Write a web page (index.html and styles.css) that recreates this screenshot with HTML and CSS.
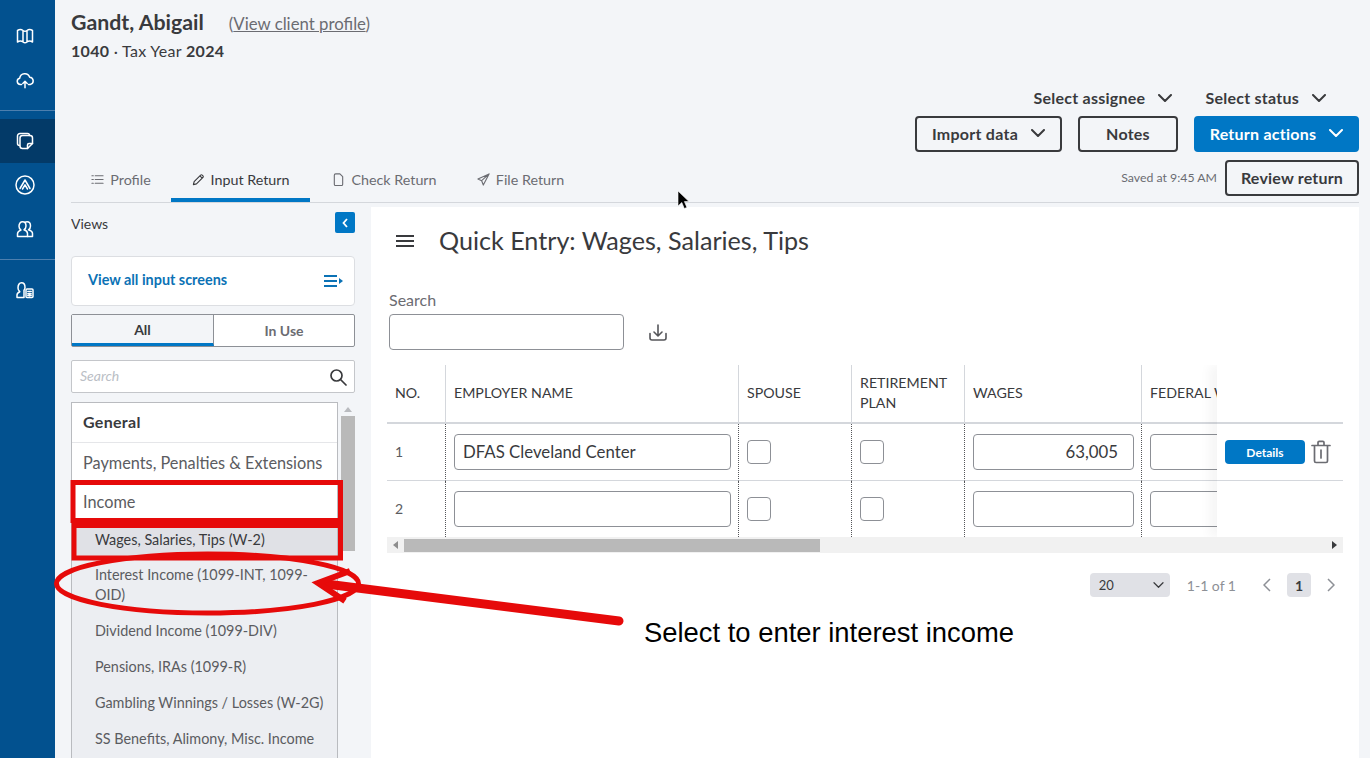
FILE: index.html
```html
<!DOCTYPE html>
<html lang="en">
<head>
<meta charset="utf-8">
<title>Quick Entry: Wages, Salaries, Tips</title>
<link rel="stylesheet" href="styles.css">
</head>
<body>
<div class="app">
  <nav class="rail">
    <div class="rail-group">
      <a class="rail-item"><svg class="ri" viewBox="0 0 18 18"><path d="M1.500 3.500c2-1.200 3.800-1.200 5.500 0v11.500c-1.700-1.200-3.500-1.200-5.500 0zM7 3.500c1.300 1 2.700 1 4 0V15c-1.300 1-2.700 1-4 0zM11 3.500c1.700-1.200 3.500-1.200 5.500 0V15c-2-1.200-3.800-1.200-5.500 0z"/></svg></a>
      <a class="rail-item"><svg class="ri" viewBox="0 0 18 18"><path d="M5.500 13.500H4.300a3.200 3.200 0 0 1-.6-6.300 5.200 5.200 0 0 1 10-1 3.700 3.700 0 0 1 .6 7.300h-1.800"/><path d="M9 16.800v-6.300M6.800 12.500 9 10.300l2.200 2.200"/></svg></a>
    </div>
    <div class="rail-group">
      <a class="rail-item active"><svg class="ri" viewBox="0 0 18 18"><path d="M3.500 13.500A2 2 0 0 1 1.500 11.500V4A2.500 2.500 0 0 1 4 1.500h7.500a2 2 0 0 1 2 2"/><path d="M4 6A2.500 2.500 0 0 1 6.500 3.500H14A2.500 2.500 0 0 1 16.500 6v5.500l-5 5H6.500A2.500 2.500 0 0 1 4 14z"/><path d="M11.500 16.500v-3.500a1.500 1.500 0 0 1 1.500-1.500h3.500"/></svg></a>
      <a class="rail-item"><svg class="ri ri-lg" viewBox="0 0 20 20"><circle cx="10" cy="10" r="9"/><path d="M5 13.500 10 5l5 8.500M7.500 14 10 9.800l2.500 4.200"/></svg></a>
      <a class="rail-item"><svg class="ri" viewBox="0 0 18 18"><path d="M1.500 16.500v-2.700c0-2 1.500-3 3.500-3.700-1.500-1-2-2.300-2-3.800C3 3.500 4.500 1.800 6.500 1.800S10 3.500 10 6c0 1.500-.5 2.800-2 3.800 2 .7 3.500 1.700 3.500 3.700v3z"/><path d="M9 2.300c.7-.3 1.400-.5 2-.5 2 0 3.500 1.700 3.500 4.200 0 1.500-.5 2.800-2 3.800 2 .7 4 1.700 4 3.700v3h-5"/></svg></a>
    </div>
    <div class="rail-group">
      <a class="rail-item"><svg class="ri" viewBox="0 0 18 18"><path d="M1 16.500v-2.500c0-1.800 1.200-2.600 2.800-3.300-1.200-.9-1.800-2.200-1.800-3.700C2 4 3.200 1.800 5.500 1.800S9 4 9 6.500c0 1-.3 2-1 2.800v7.200z"/><rect x="10" y="8" width="7" height="8.500" rx="1"/><path d="M11.800 10.500h3.400M11.800 12.800h3.400M11.800 14.500h3.400M13.500 12.500V15"/></svg></a>
    </div>
  </nav>

  <main class="main">
    <header class="head">
      <div class="client">
        <div class="client-row"><h1 class="client-name">Gandt, Abigail</h1><a class="client-link">(<u>View client profile</u>)</a></div>
        <div class="client-sub"><b>1040</b> · Tax Year <b>2024</b></div>
      </div>
      <div class="selects">
        <span class="sel">Select assignee <svg class="chev" viewBox="0 0 14 8"><path d="M1 1l6 6 6-6"/></svg></span>
        <span class="sel">Select status <svg class="chev" viewBox="0 0 14 8"><path d="M1 1l6 6 6-6"/></svg></span>
      </div>
      <div class="actions">
        <button class="btn btn-import">Import data <svg class="chev" viewBox="0 0 14 8"><path d="M1 1l6 6 6-6"/></svg></button>
        <button class="btn btn-notes">Notes</button>
        <button class="btn btn-primary">Return actions <svg class="chev" viewBox="0 0 14 8"><path d="M1 1l6 6 6-6"/></svg></button>
      </div>
    </header>

    <div class="tabbar">
      <div class="tabs">
        <a class="tab tab-profile"><svg class="tab-ico" viewBox="0 0 14 14"><path d="M4.500 3H13M4.500 7H13M4.500 11H13M1 3h1.500M1 7h1.500M1 11h1.500"/></svg>Profile</a>
        <a class="tab tab-input is-active"><svg class="tab-ico" viewBox="0 0 14 14"><path d="M1.500 12.500l.8-3.300 7-7a1.200 1.200 0 0 1 1.700 0l.8.800a1.200 1.200 0 0 1 0 1.700l-7 7zM8.500 3l2.500 2.500"/></svg>Input Return</a>
        <a class="tab tab-check"><svg class="tab-ico" viewBox="0 0 14 14"><path d="M2.500 2.500a1.500 1.500 0 0 1 1.500-1.500h4.500l3 3v8a1.500 1.500 0 0 1-1.500 1.500H4a1.500 1.500 0 0 1-1.500-1.500z"/></svg>Check Return</a>
        <a class="tab tab-file"><svg class="tab-ico" viewBox="0 0 14 14"><path d="M13 1 1 6.500l4 1.800L6.800 13zM13 1 5 8.300"/></svg>File Return</a>
      </div>
      <div class="review">
        <span class="saved">Saved at 9:45 AM</span>
        <button class="btn btn-review">Review return</button>
      </div>
    </div>

    <div class="work">
      <aside class="views">
        <div class="views-head"><span>Views</span><button class="collapse"><svg viewBox="0 0 6 10"><path d="M5 1 1.500 5 5 9"/></svg></button></div>
        <a class="all-screens"><span>View all input screens</span><svg class="list-ico" viewBox="0 0 19 14"><path class="ls" d="M0 2h13M0 7h13M0 12h13"/><path class="lf" d="M15 4l4 3-4 3z"/></svg></a>
        <div class="seg"><span class="seg-a">All</span><span class="seg-b">In Use</span></div>
        <div class="side-search"><span>Search</span><svg viewBox="0 0 18 18"><circle cx="7.500" cy="7.500" r="5.500"/><path d="M11.500 11.500 17 17"/></svg></div>
        <div class="list-wrap">
          <ul class="list">
            <li class="li-head">General</li>
            <li class="li-top">Payments, Penalties &amp; Extensions</li>
            <li class="li-top li-income">Income</li>
            <li class="li-sub li-current">Wages, Salaries, Tips (W-2)</li>
            <li class="li-sub li-two">Interest Income (1099-INT, 1099-OID)</li>
            <li class="li-sub">Dividend Income (1099-DIV)</li>
            <li class="li-sub">Pensions, IRAs (1099-R)</li>
            <li class="li-sub">Gambling Winnings / Losses (W-2G)</li>
            <li class="li-sub">SS Benefits, Alimony, Misc. Income</li>
          </ul>
          <div class="vbar"><i class="vup"></i><i class="vthumb"></i></div>
        </div>
      </aside>

      <section class="card">
        <div class="card-title"><svg class="burger" viewBox="0 0 18 12"><path d="M0 1h18M0 6h18M0 11h18"/></svg><h2>Quick Entry: Wages, Salaries, Tips</h2></div>
        <label class="search-label">Search</label>
        <div class="search-row">
          <div class="search-input"></div>
          <svg class="dl" viewBox="0 0 18 18"><path d="M1 9.500V14a2 2 0 0 0 2 2h12a2 2 0 0 0 2-2V9.500M9 1v10.500M5 8l4 4 4-4"/></svg>
        </div>
        <div class="table-wrap">
          <div class="grid">
            <div class="th">NO.</div><div class="th sep">EMPLOYER NAME</div><div class="th sep">SPOUSE</div><div class="th sep">RETIREMENT<br>PLAN</div><div class="th sep">WAGES</div><div class="th sep">FEDERAL WITHHELD</div>

            <div class="td td-r1">1</div>
            <div class="td td-r1 dot"><div class="inp">DFAS Cleveland Center</div></div>
            <div class="td td-r1 dot"><div class="chk"></div></div>
            <div class="td td-r1 dot"><div class="chk"></div></div>
            <div class="td td-r1 dot"><div class="inp inp-num">63,005</div></div>
            <div class="td td-r1 dot"><div class="inp inp-fed"></div></div>

            <div class="td">2</div>
            <div class="td dot"><div class="inp"></div></div>
            <div class="td dot"><div class="chk"></div></div>
            <div class="td dot"><div class="chk"></div></div>
            <div class="td dot"><div class="inp"></div></div>
            <div class="td dot"><div class="inp inp-fed"></div></div>
          </div>
          <div class="sticky">
            <div class="sticky-row">
              <button class="details">Details</button>
              <svg class="trash" viewBox="0 0 20 24"><path d="M1 5.500h18M3.500 5.500V21a1.500 1.500 0 0 0 1.500 1.500h10a1.500 1.500 0 0 0 1.500-1.500V5.500M7 5.500V2.500A1.200 1.200 0 0 1 8.200 1.300h3.600A1.200 1.200 0 0 1 13 2.500v3M10 10v8"/></svg>
            </div>
          </div>
          <div class="hbar"><i class="hl"></i><i class="hthumb"></i><i class="hr"></i></div>
        </div>
        <div class="pager">
          <div class="page-size"><span>20</span><svg class="chev chev-sm" viewBox="0 0 14 8"><path d="M1 1l6 6 6-6"/></svg></div>
          <span class="page-info">1-1 of 1</span>
          <svg class="pg-arrow" viewBox="0 0 8 14"><path d="M7 1 1 7l6 6"/></svg>
          <span class="page-num">1</span>
          <svg class="pg-arrow" viewBox="0 0 8 14"><path d="M1 1l6 6-6 6"/></svg>
        </div>
      </section>
    </div>
  </main>
</div>

<svg class="annot" viewBox="0 0 1370 758">
  <rect class="an-s" x="73" y="482.500" width="267.500" height="38"/>
  <rect class="an-s" x="74" y="525.500" width="266.500" height="32.500"/>
  <ellipse class="an-e" cx="207.500" cy="583.500" rx="151" ry="29.500"/>
  <path class="an-l" d="M619 621 326 584"/>
  <path class="an-h" d="M350 571 318 583 345 601"/>
</svg>
<p class="callout">Select to enter interest income</p>
<svg class="cursor" viewBox="0 0 14 20"><path d="M1 1v15l3.800-3.500 2.500 6 2.600-1.100-2.500-5.800H12z"/></svg>
</body>
</html>
```
FILE: styles.css
```css
* , *::before, *::after { box-sizing: border-box; }
html, body { margin: 0; height: 100%; overflow: hidden; }
body { font-family: "Lato", "Liberation Sans", sans-serif; color: #393a3d; background: #f3f5f8; position: relative; }
button { font-family: inherit; cursor: pointer; }
h1, h2, ul, p { margin: 0; padding: 0; }

.app { display: flex; height: 758px; }

.rail { width: 55px; flex: none; background: #02518f; display: flex; flex-direction: column; padding-top: 14px; }
.rail-group { display: flex; flex-direction: column; border-bottom: 1px solid #4d7fae; padding-bottom: 8px; margin-bottom: 8px; }
.rail-group:last-child { border-bottom: 0; }
.rail-item { height: 44px; display: flex; align-items: center; justify-content: center; padding-right: 5px; }
.rail-item.active { background: #033a68; }
.ri { width: 18px; height: 18px; fill: none; stroke: #fff; stroke-width: 1.500; stroke-linejoin: round; stroke-linecap: round; }
.ri-lg { width: 20px; height: 20px; }

.main { flex: 1; min-width: 0; padding: 0 11px 0 16px; }

.head { position: relative; height: 160px; display: flex; flex-direction: column; align-items: flex-end; padding-top: 86px; }
.client { position: absolute; left: 0; top: 8px; }
.client-row { display: flex; align-items: baseline; gap: 25px; }
.client-name { font-size: 21.300px; font-weight: 700; line-height: 28px; color: #393a3d; }
.client-link { font-size: 16.800px; color: #6b6c72; }
.client-sub { font-size: 16px; letter-spacing: .3px; line-height: 20px; margin-top: 5px; color: #393a3d; }

.selects { display: flex; height: 22px; align-items: center; gap: 33px; padding-right: 33px; }
.sel { font-size: 16px; letter-spacing: .25px; font-weight: 700; display: flex; align-items: center; gap: 13px; color: #393a3d; }
.sel .chev { margin-top: 2px; }
.chev { width: 14px; height: 8px; fill: none; stroke: #393a3d; stroke-width: 2; stroke-linecap: round; stroke-linejoin: round; }

.actions { display: flex; gap: 16px; margin-top: 8px; }
.btn { height: 36px; border: 2px solid #393a3d; border-radius: 4px; background: transparent; font-size: 16px; letter-spacing: .25px; font-weight: 700; color: #393a3d; display: inline-flex; align-items: center; justify-content: center; gap: 13px; padding: 0 0 2px; }
.btn-import { width: 147px; }
.btn-notes { width: 100px; }
.btn-primary { width: 165px; background: #0077c5; border-color: #0077c5; color: #fff; }
.btn-primary .chev { stroke: #fff; }

.tabbar { display: flex; justify-content: space-between; align-items: flex-end; height: 43px; border-bottom: 1px solid #d4d7dc; }
.tabs { display: flex; height: 38px; align-self: flex-end; }
.tab { display: flex; align-items: center; justify-content: center; gap: 6px; font-size: 14.300px; color: #6b6c72; border-bottom: 4px solid transparent; padding-bottom: 4px; }
.tab-profile { width: 100px; }
.tab-input { width: 139px; }
.tab-check { width: 149px; }
.tab-file { width: 123px; }
.tab.is-active { border-bottom-color: #0077c5; color: #393a3d; }
.tab-ico { width: 13px; height: 13px; fill: none; stroke: currentColor; stroke-width: 1.200; stroke-linecap: round; stroke-linejoin: round; }
.review { display: flex; align-items: center; gap: 8px; margin-bottom: 6px; }
.saved { font-size: 12.300px; color: #6b6c72; padding-bottom: 2px; }
.btn-review { width: 134px; letter-spacing: .2px; }

.work { display: flex; gap: 16px; padding-top: 4px; height: 555px; }
.views { width: 284px; flex: none; overflow: hidden; }
.views-head { height: 49px; display: flex; justify-content: space-between; align-items: flex-start; padding-top: 5px; font-size: 14px; color: #393a3d; }
.views-head span { line-height: 20px; margin-top: 2px; }
.collapse { width: 20px; height: 21px; background: #0077c5; border: 0; border-radius: 2px; padding: 0; display: flex; align-items: center; justify-content: center; }
.collapse svg { width: 6px; height: 10px; fill: none; stroke: #fff; stroke-width: 1.800; }
.all-screens { height: 50px; background: #fff; border: 1px solid #dcdee2; border-radius: 4px; display: flex; justify-content: space-between; align-items: center; padding: 0 11px 0 16px; font-size: 14.400px; font-weight: 700; color: #0b72b5; }
.all-screens span { padding-bottom: 3px; }
.list-ico { width: 19px; height: 14px; }
.ls { fill: none; stroke: #0b72b5; stroke-width: 2; }
.lf { fill: #0b72b5; }
.seg { display: flex; height: 33px; margin-top: 8px; border: 1px solid #8d9096; border-radius: 2px; background: #fff; font-size: 14px; }
.seg span { display: flex; align-items: center; justify-content: center; }
.seg-a { width: 142px; background: #f3f5f8; font-weight: 700; border-bottom: 3px solid #0077c5; border-right: 1px solid #8d9096; }
.seg-b { flex: 1; color: #6b6c72; font-weight: 700; padding-bottom: 1px; }
.side-search { height: 33px; margin-top: 13px; border: 1px solid #c4c6ca; border-radius: 2px; background: #fff; display: flex; align-items: center; justify-content: space-between; padding: 0 7px 0 8px; font-size: 14px; font-style: italic; color: #babec5; }
.side-search span { padding-bottom: 2px; }
.side-search svg { width: 18px; height: 18px; fill: none; stroke: #393a3d; stroke-width: 1.700; stroke-linecap: round; }

.list-wrap { display: flex; margin-top: 9px; height: 356px; }
.list { width: 267px; flex: none; list-style: none; border: 1px solid #b9bbbf; border-bottom: 0; background: #eceef2; overflow: hidden; }
.li-head { height: 40px; background: #fff; border-bottom: 1px solid #e5e6e9; display: flex; align-items: center; padding: 0 0 2px 11px; font-size: 16px; letter-spacing: .3px; font-weight: 700; }
.li-top { height: 38px; background: #fff; display: flex; align-items: center; padding-left: 11px; font-size: 16.300px; color: #5b5c61; }
.li-income { height: 39px; padding-top: 2px; }
.li-sub { min-height: 36px; padding: 8px 8px 8px 23px; font-size: 14.400px; line-height: 20px; color: #5b5c61; }
.li-current { height: 38px; background: #e0e1e6; color: #393a3d; padding-top: 10px; }
.li-two { padding-top: 7px; padding-bottom: 7px; height: 55px; }
.vbar { width: 14px; margin-left: 3px; display: flex; flex-direction: column; align-items: center; }
.vup { width: 0; height: 0; margin-top: 5px; border: 4px solid transparent; border-top: 0; border-bottom: 5px solid #b9bbbf; }
.vthumb { width: 14px; height: 135px; margin-top: 4px; background: #b9b9b9; }

.card { flex: 1; min-width: 0; background: #fff; padding: 0 16px; }
.card-title { display: flex; align-items: center; height: 68px; padding-left: 9px; gap: 25px; }
.burger { width: 18px; height: 12px; fill: none; stroke: #393a3d; stroke-width: 2; flex: none; }
.card-title h2 { font-size: 25.150px; font-weight: 400; color: #393a3d; padding-bottom: 3px; }
.search-label { display: block; font-size: 16px; line-height: 20px; margin-top: 15px; padding-left: 2px; color: #6b6c72; }
.search-row { display: flex; align-items: center; gap: 25px; padding-left: 2px; margin-top: 4px; }
.search-input { width: 235px; height: 36px; background: #fff; border: 1px solid #8d9096; border-radius: 4px; }
.dl { width: 18px; height: 18px; margin-top: 2px; fill: none; stroke: #55565a; stroke-width: 1.600; stroke-linecap: round; stroke-linejoin: round; }

.table-wrap { position: relative; margin-top: 15px; height: 188px; overflow: hidden; }
.grid { display: grid; grid-template-columns: 58px 293px 113px 113px 177px 200px; grid-template-rows: 59px 57px 56px; }
.th { font-size: 14.200px; line-height: 20px; color: #393a3d; display: flex; align-items: center; padding: 0 0 2px 8px; border-bottom: 2px solid #d4d7dc; white-space: nowrap; }
.th.sep { border-left: 1px solid #d4d7dc; }
.td { display: flex; align-items: center; padding-left: 8px; font-size: 14px; color: #5b5c61; }
.td:nth-child(6n+1) { padding-bottom: 2px; }
.td-r1 { border-bottom: 1px solid #d4d7dc; }
.dot { border-left: 1px dotted #55565a; }
.inp { width: 277px; height: 36px; border: 1px solid #8d9096; border-radius: 4px; background: #fff; display: flex; align-items: center; padding: 0 8px 2px; font-size: 16.800px; color: #393a3d; }
.inp-num { width: 160px; justify-content: flex-end; padding-right: 15px; }
.td:nth-child(6n+5) .inp { width: 161px; }
.inp-fed { width: 161px; }
.chk { width: 24px; height: 24px; border: 1px solid #8d9096; border-radius: 4px; background: #fff; }
.sticky { position: absolute; top: 0; right: 0; width: 126px; height: 172px; background: #fff; box-shadow: -8px 0 10px rgba(0,0,0,.04); }
.sticky::before { content: ""; display: block; height: 59px; border-bottom: 2px solid #d4d7dc; }
.sticky-row { height: 57px; display: flex; align-items: center; gap: 6px; padding-left: 8px; border-bottom: 1px solid #d4d7dc; }
.details { width: 80px; height: 24px; border: 0; border-radius: 4px; background: #0077c5; color: #fff; font-size: 12px; font-weight: 700; padding: 0; }
.trash { width: 20px; height: 24px; fill: none; stroke: #6b6c72; stroke-width: 1.700; stroke-linecap: round; stroke-linejoin: round; }
.hbar { position: absolute; left: 0; right: 0; bottom: 0; height: 16px; background: #f1f1f1; display: flex; align-items: center; }
.hl { width: 0; height: 0; margin-left: 6px; border: 4px solid transparent; border-left: 0; border-right: 5px solid #8d8d8d; }
.hthumb { width: 416px; height: 13px; margin-left: 6px; background: #b9b9b9; }
.hr { width: 0; height: 0; margin-left: auto; margin-right: 6px; border: 4px solid transparent; border-right: 0; border-left: 5px solid #393a3d; }

.pager { display: flex; align-items: center; justify-content: flex-end; height: 24px; margin-top: 20px; font-size: 14px; }
.page-size { width: 80px; height: 24px; background: #e0e1e6; border-radius: 4px; display: flex; align-items: center; justify-content: space-between; padding: 0 6px 0 9px; font-size: 13px; }
.chev-sm { width: 11px; height: 6px; stroke-width: 1.600; }
.page-info { margin-left: 17px; color: #8d9096; }
.pg-arrow { width: 8px; height: 14px; fill: none; stroke: #8d9096; stroke-width: 1.500; margin-left: 27px; }
.page-num { width: 24px; height: 24px; margin-left: 16px; background: #e0e1e6; border-radius: 4px; display: flex; align-items: center; justify-content: center; font-size: 14px; font-weight: 700; }
.page-num + .pg-arrow { margin-left: 16px; margin-right: 8px; }

.annot { position: absolute; left: 0; top: 0; width: 1370px; height: 758px; pointer-events: none; }
.an-s { fill: none; stroke: #e60a0a; stroke-width: 5; }
.an-e { fill: none; stroke: #e60a0a; stroke-width: 5; }
.an-l { fill: none; stroke: #e60a0a; stroke-width: 9; stroke-linecap: round; }
.an-h { fill: none; stroke: #e60a0a; stroke-width: 6; stroke-linejoin: miter; }
.callout { position: absolute; left: 644px; top: 617px; font-family: "Liberation Sans", Arial, sans-serif; font-size: 27.400px; line-height: 32px; color: #000; }
.cursor { position: absolute; left: 677px; top: 190px; width: 14px; height: 20px; }
.cursor path { fill: #000; stroke: #fff; stroke-width: .6; }
```
